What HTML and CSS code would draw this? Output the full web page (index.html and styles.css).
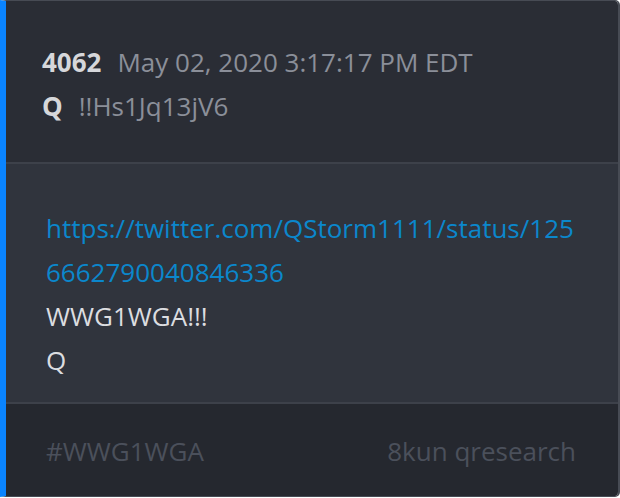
FILE: index.html
```html
<!DOCTYPE html>
<html>
<head>
<meta charset="utf-8">
<link rel="stylesheet" href="styles.css">
</head>
<body>
<div class="card">
  <div class="head">
    <div class="line"><span class="num">4062</span><span class="date">May 02, 2020 3:17:17 PM EDT</span></div>
    <div class="line"><span class="num">Q</span><span class="trip">!!Hs1Jq13jV6</span></div>
  </div>
  <div class="body">
    <a class="link" href="#">https://twitter.com/QStorm1111/status/1256662790040846336</a>
    <div>WWG1WGA!!!</div>
    <div>Q</div>
  </div>
  <div class="foot">
    <span>#WWG1WGA</span>
    <span>8kun qresearch</span>
  </div>
</div>
</body>
</html>
```

FILE: styles.css
```css
html, body { margin: 0; padding: 0; background: #ffffff; }
.card {
  width: 612px;
  height: 495px;
  box-sizing: content-box;
  border: 1px solid #474b54;
  border-left: 6px solid #0a84ff;
  border-right-width: 2px;
  border-radius: 0 5px 5px 0;
  overflow: hidden;
  font-family: "Open Sans", sans-serif;
  font-size: 26px;
  line-height: 44px;
  display: flex;
  flex-direction: column;
}
.head {
  background: #2a2d35;
  padding: 39px 36px 0;
  height: 122px;
  border-bottom: 2px solid #3d414a;
}
.num { font-weight: 700; color: #d6d7da; margin-right: 16px; }
.date, .trip { color: #8b8f99; }
.body {
  background: #30343d;
  padding: 42px 34px 0 40px;
  height: 196px;
  border-bottom: 2px solid #3d414a;
  color: #dcdde0;
  word-break: break-all;
}
.link { color: #0b87cc; text-decoration: none; display: block; }
.foot {
  flex: 1;
  background: #25282f;
  padding: 25px 42px 0 40px;
  display: flex;
  justify-content: space-between;
  color: #4b505b;
}
```
